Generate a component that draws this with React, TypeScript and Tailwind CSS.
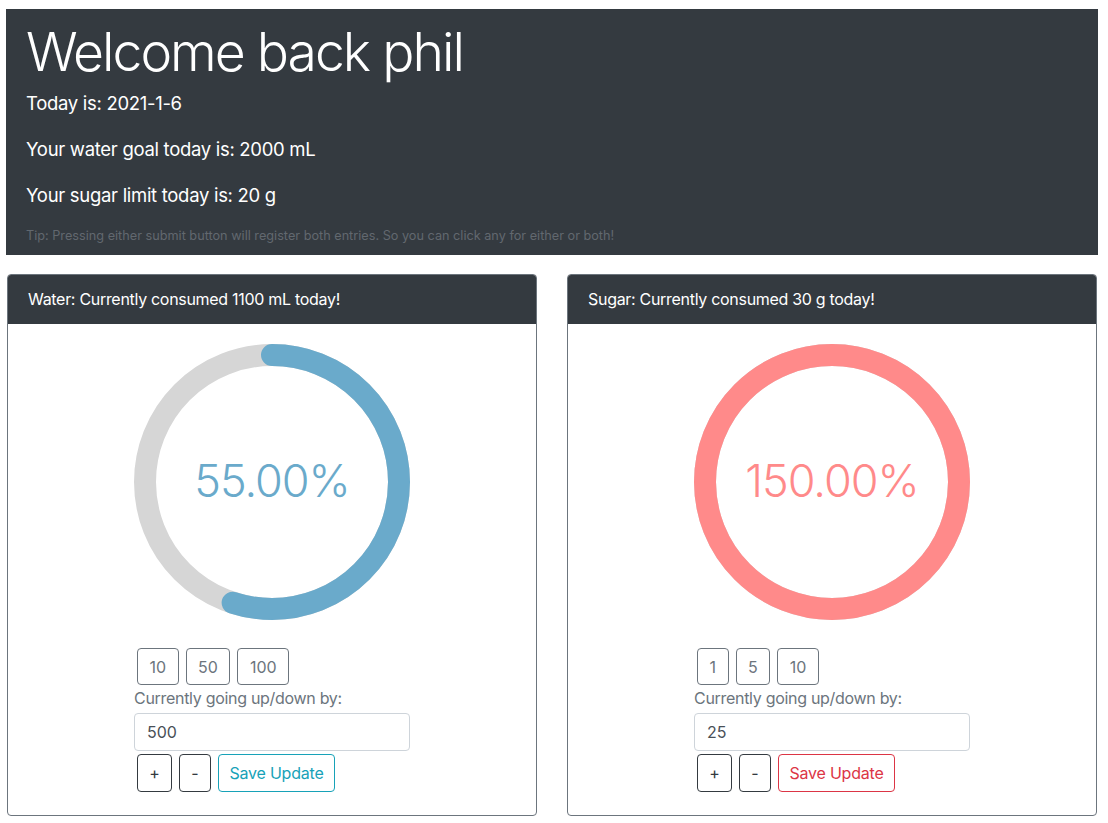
import React from 'react';

type Tracker = {
  title: string;
  percent: number;
  color: string;
  steps: string[];
  amount: string;
  saveClass: string;
};

const trackers: Tracker[] = [
  {
    title: 'Water: Currently consumed 1100 mL today!',
    percent: 55,
    color: '#6aaacb',
    steps: ['10', '50', '100'],
    amount: '500',
    saveClass: 'border-[#17a2b8] text-[#17a2b8]',
  },
  {
    title: 'Sugar: Currently consumed 30 g today!',
    percent: 150,
    color: '#ff8a8a',
    steps: ['1', '5', '10'],
    amount: '25',
    saveClass: 'border-[#dc3545] text-[#dc3545]',
  },
];

function Ring({ percent, color }: { percent: number; color: string }) {
  const r = 127;
  const c = 2 * Math.PI * r;
  const filled = Math.min(percent, 100) / 100;
  return (
    <div className="relative w-[276px] h-[276px]">
      <svg width="276" height="276" viewBox="0 0 276 276">
        <circle cx="138" cy="138" r={r} fill="none" stroke="#d6d6d6" strokeWidth="22" />
        <circle
          cx="138"
          cy="138"
          r={r}
          fill="none"
          stroke={color}
          strokeWidth="22"
          strokeLinecap={filled < 1 ? 'round' : 'butt'}
          strokeDasharray={`${c * filled} ${c}`}
          transform="rotate(-90 138 138)"
        />
      </svg>
      <div
        className="absolute inset-0 flex items-center justify-center text-[45px] font-light tracking-[-1px] pb-[2px]"
        style={{ color }}
      >
        {percent.toFixed(2)}%
      </div>
    </div>
  );
}

function TrackerCard({ t }: { t: Tracker }) {
  return (
    <div className="w-[530px] border border-[#6c757d] rounded-[4px] overflow-hidden">
      <div className="bg-[#343a40] text-white text-[16px] leading-6 tracking-[-0.3px] px-5 py-3 border-b border-[#343a40]">
        {t.title}
      </div>
      <div className="pt-5 pb-[23px] flex flex-col items-center">
        <Ring percent={t.percent} color={t.color} />
        <div className="w-[276px] mt-7">
          <div className="flex gap-[7px] pl-[3px]">
            {t.steps.map((s) => (
              <button
                key={s}
                className="h-[37px] px-[11.5px] border border-[#6c757d] rounded-[4px] text-[#6c757d] text-[16px]"
              >
                {s}
              </button>
            ))}
          </div>
          <div className="text-[#6c757d] text-[16px] leading-6 tracking-[-0.3px] mt-px">
            Currently going up/down by:
          </div>
          <div className="mt-[3px] h-[38px] border border-[#ced4da] rounded-[4px] px-3 flex items-center text-[#495057] text-[16px]">
            {t.amount}
          </div>
          <div className="flex gap-[7px] pl-[3px] mt-[3px]">
            <button className="h-[38px] w-[35px] border border-[#343a40] rounded-[4px] text-[#343a40] text-[16px]">+</button>
            <button className="h-[38px] w-[32px] border border-[#343a40] rounded-[4px] text-[#343a40] text-[16px]">-</button>
            <button className={`h-[38px] w-[117px] border rounded-[4px] text-[16px] tracking-[-0.2px] ${t.saveClass}`}>
              Save Update
            </button>
          </div>
        </div>
      </div>
    </div>
  );
}

export default function App() {
  return (
    <div className="min-h-screen bg-white pt-[9px] pl-[6px] font-['Inter',sans-serif]">
      <div className="w-[1092px] h-[246px] bg-[#343a40] text-white px-5 pt-[9px]">
        <h1 className="text-[53.5px] leading-[66px] font-light tracking-[-2px] pt-px">Welcome back phil</h1>
        <div className="mt-[3px]">
          <p className="text-[18.5px] leading-[30px] tracking-[-0.3px] mb-4">Today is: 2021-1-6</p>
          <p className="text-[18.5px] leading-[30px] tracking-[-0.3px] mb-4">Your water goal today is: 2000 mL</p>
          <p className="text-[18.5px] leading-[30px] tracking-[-0.3px] mb-4">Your sugar limit today is: 20 g</p>
        </div>
        <p className="text-[12.7px] leading-[19px] text-[#62686f] mt-[3px]">
          Tip: Pressing either submit button will register both entries. So you can click any for either or both!
        </p>
      </div>
      <div className="flex gap-[30px] mt-[19px] pl-px">
        {trackers.map((t) => (
          <TrackerCard key={t.title} t={t} />
        ))}
      </div>
    </div>
  );
}
